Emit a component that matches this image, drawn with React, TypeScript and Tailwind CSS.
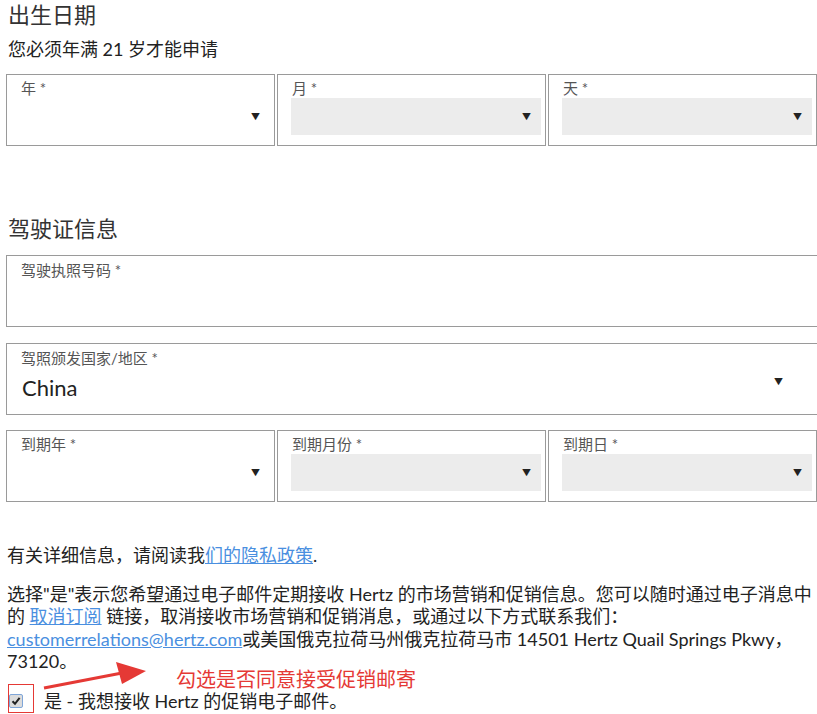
import React from "react";

const FONT = { fontFamily: 'Lato, "Noto Sans CJK SC", sans-serif' };

function Arrow({ className = "" }: { className?: string }) {
  return <span className={"text-[9px] text-[#222] leading-none " + className}>▼</span>;
}

function SelectBox({ label, gray }: { label: string; gray: boolean }) {
  return (
    <div className="w-[269px] h-[72px] border border-[#9a9a9a] bg-white flex flex-col shrink-0">
      <div className="h-[23px] pl-[14px] pt-[4px] text-[15px] leading-[18px] text-[#555]">{label} *</div>
      <div className={"ml-[13px] mr-[4px] h-[37px] flex items-center justify-end pr-[10px] " + (gray ? "bg-[#ececec]" : "")}>
        <Arrow />
      </div>
    </div>
  );
}

export default function App() {
  return (
    <div className="w-[817px] h-[714px] overflow-hidden bg-white relative text-[#222]" style={FONT}>
      <div className="pl-[6px]">
        <h1 className="pl-[2px] text-[22px] leading-[30px] text-[#333]">出生日期</h1>
        <p className="pl-[2px] mt-[6px] text-[18px] leading-[26px]">您必须年满 21 岁才能申请</p>
        <div className="mt-[12px] flex gap-[2px]">
          <SelectBox label="年" gray={false} />
          <SelectBox label="月" gray={true} />
          <SelectBox label="天" gray={true} />
        </div>

        <h2 className="mt-[68px] pl-[2px] text-[22px] leading-[30px] text-[#333]">驾驶证信息</h2>
        <div className="mt-[11px] w-[830px] h-[72px] border border-[#9a9a9a] pl-[14px] pt-[5px] text-[15px] leading-[18px] text-[#555]">
          驾驶执照号码 *
        </div>
        <div className="mt-[16px] w-[830px] h-[72px] border border-[#9a9a9a] flex flex-col">
          <div className="pl-[14px] pt-[5px] text-[15px] leading-[18px] text-[#555]">驾照颁发国家/地区 *</div>
          <div className="flex items-center justify-between pl-[15px] mt-[7px]">
            <span className="text-[22px] leading-[28px] text-[#222]">China</span>
            <Arrow className="mr-[52px] -mt-[14px]" />
          </div>
        </div>
        <div className="mt-[15px] flex gap-[2px]">
          <SelectBox label="到期年" gray={false} />
          <SelectBox label="到期月份" gray={true} />
          <SelectBox label="到期日" gray={true} />
        </div>

        <p className="mt-[42px] pl-[1px] text-[18px] leading-[22px]">
          有关详细信息，请阅读我<span className="text-[#4a8fe0] underline">们的隐私政策</span>.
        </p>
        <div className="mt-[17px] pl-[1px] text-[18px] leading-[22.3px] whitespace-nowrap">
          <div>选择"是"表示您希望通过电子邮件定期接收 Hertz 的市场营销和促销信息。您可以随时通过电子消息中</div>
          <div>
            的 <span className="text-[#4a8fe0] underline">取消订阅</span> 链接，取消接收市场营销和促销消息，或通过以下方式联系我们：
          </div>
          <div>
            <span className="text-[#4a8fe0] underline">customerrelations@hertz.com</span>或美国俄克拉荷马州俄克拉荷马市 14501 Hertz Quail Springs Pkwy，
          </div>
          <div>73120。</div>
        </div>
        <div className="mt-[18px] flex items-center gap-[21px] pl-[3px]">
          <span className="w-[14px] h-[14px] border border-[#7fa6d9] bg-[#dcdcdc] rounded-[2px] flex items-center justify-center">
            <svg width="10" height="10" viewBox="0 0 10 10">
              <path d="M1.5 5.2 L4 7.8 L8.6 1.8" stroke="#222" strokeWidth="2" fill="none" />
            </svg>
          </span>
          <span className="text-[18px] leading-[22px]">是 - 我想接收 Hertz 的促销电子邮件。</span>
        </div>
      </div>

      {/* annotation overlay */}
      <div className="absolute left-[8px] top-[684px] w-[26px] h-[29px] border border-[#e53935]" />
      <svg className="absolute left-0 top-0" width="817" height="714" viewBox="0 0 817 714">
        <path d="M44 688 L122 673" stroke="#e53935" strokeWidth="3" fill="none" />
        <path d="M116 662 L146 671 L122 684 Z" fill="#e53935" />
      </svg>
      <div className="absolute left-[176px] top-[669px] text-[20px] leading-[20px] text-[#e53935]">勾选是否同意接受促销邮寄</div>
    </div>
  );
}
